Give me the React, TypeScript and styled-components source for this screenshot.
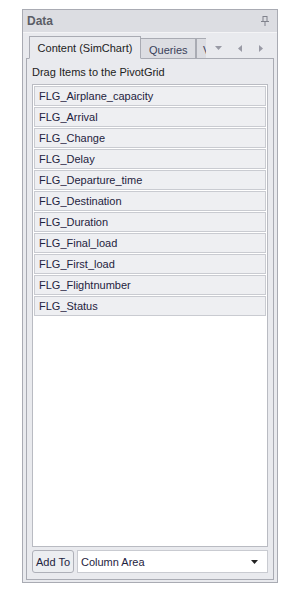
import React from "react";
import styled, { createGlobalStyle } from "styled-components";

const Global = createGlobalStyle`
  html, body { margin: 0; padding: 0; background: #ffffff; }
  body { font-family: "Liberation Sans", Arial, sans-serif; }
`;

const Page = styled.div`
  width: 283px;
  height: 597px;
  padding: 9px 5px 14px 22px;
  box-sizing: border-box;
  display: flex;
`;

const Panel = styled.div`
  flex: 1;
  display: flex;
  flex-direction: column;
  border: 1px solid #a9abb3;
  background: #e9eaee;
`;

const Header = styled.div`
  height: 22px;
  display: flex;
  align-items: center;
  justify-content: space-between;
  padding: 0 8px 0 4px;
  background: #dcdde2;
  border-bottom: 1px solid #f4f4f6;
  font-family: "Liberation Sans", Arial, sans-serif;
  font-weight: bold;
  font-size: 12px;
  color: #5b5d66;
`;

const TabStrip = styled.div`
  display: flex;
  align-items: flex-end;
  height: 25px;
  padding: 0 0 0 6px;
  position: relative;
  z-index: 1;
`;

const Tab = styled.div<{ $active?: boolean; $w: number }>`
  width: ${(p) => p.$w}px;
  flex: none;
  height: ${(p) => (p.$active ? 23 : 20)}px;
  box-sizing: border-box;
  border: 1px solid #a9abb3;
  border-bottom: ${(p) => (p.$active ? "1px solid #e9eaee" : "none")};
  margin-bottom: ${(p) => (p.$active ? -1 : 0)}px;
  background: ${(p) => (p.$active ? "#e9eaee" : "#dcdde2")};
  display: flex;
  align-items: center;
  justify-content: ${(p) => (p.$active ? "center" : "flex-start")};
  padding-left: ${(p) => (p.$active ? 0 : 8)}px;
  padding-top: ${(p) => (p.$active ? 0 : 3)}px;
  font-family: "Liberation Sans", Arial, sans-serif;
  font-size: 11px;
  color: ${(p) => (p.$active ? "#222" : "#3a3f5a")};
  white-space: nowrap;
  overflow: hidden;
  & + & { border-left: none; }
`;

const TabClip = styled.div`
  width: 10px;
  height: 20px;
  overflow: hidden;
  display: flex;
  align-items: flex-end;
`;

const PartialTab = styled.div`
  width: 60px;
  height: 20px;
  flex: none;
  box-sizing: border-box;
  border-left: 1px solid #a9abb3;
  border-top: 1px solid #a9abb3;
  background: #dcdde2;
  padding: 3px 0 0 6px;
  display: flex;
  align-items: center;
  font-size: 11px;
  color: #3a3f5a;
`;

const TabNav = styled.div`
  display: flex;
  align-items: center;
  height: 20px;
  margin-left: 2px;
`;

const NavBtn = styled.div`
  width: 21px;
  height: 20px;
  display: flex;
  align-items: center;
  justify-content: center;
`;

const Body = styled.div`
  flex: 1;
  margin: 0 3px 2px 3px;
  border: 1px solid #a9abb3;
  display: flex;
  flex-direction: column;
  padding: 0 5px 6px 5px;
`;

const Hint = styled.div`
  height: 25px;
  display: flex;
  align-items: center;
  font-size: 11px;
  color: #222;
`;

const List = styled.div`
  flex: 1;
  background: #ffffff;
  border: 1px solid #b9bbc2;
  padding: 1px 1px;
  display: flex;
  flex-direction: column;
  gap: 1px;
`;

const Item = styled.div`
  height: 20px;
  box-sizing: border-box;
  border: 1px solid #c9cbd1;
  background: #eeeff2;
  display: flex;
  align-items: center;
  padding-left: 4px;
  font-size: 11px;
  color: #1e2340;
`;

const Footer = styled.div`
  display: flex;
  gap: 3px;
  margin-top: 3px;
  height: 23px;
`;

const Button = styled.div`
  width: 42px;
  box-sizing: border-box;
  border: 1px solid #aeb0b8;
  border-radius: 3px;
  background: #eceef1;
  display: flex;
  align-items: center;
  justify-content: center;
  font-size: 11px;
  color: #1e2340;
`;

const Select = styled.div`
  flex: 1;
  box-sizing: border-box;
  border: 1px solid #c9cbd1;
  background: #ffffff;
  display: flex;
  align-items: center;
  justify-content: space-between;
  padding: 0 9px 0 3px;
  font-size: 11px;
  color: #1e2340;
`;

const Tri = ({ dir, color = "#999aa5" }: { dir: "down" | "left" | "right"; color?: string }) => {
  const pts =
    dir === "down" ? "0,0 7,0 3.5,4" : dir === "left" ? "4,0 4,7 0,3.5" : "0,0 0,7 4,3.5";
  const w = dir === "down" ? 7 : 4;
  const h = dir === "down" ? 4 : 7;
  return (
    <svg width={w} height={h} viewBox={`0 0 ${w} ${h}`}>
      <polygon points={pts} fill={color} />
    </svg>
  );
};

const Pin = () => (
  <svg width="8" height="10" viewBox="0 0 8 10">
    <rect x="2" y="0.5" width="4" height="5" fill="none" stroke="#80828c" />
    <rect x="0" y="5" width="8" height="1" fill="#80828c" />
    <rect x="3.5" y="6" width="1" height="4" fill="#80828c" />
  </svg>
);

const items = [
  "FLG_Airplane_capacity",
  "FLG_Arrival",
  "FLG_Change",
  "FLG_Delay",
  "FLG_Departure_time",
  "FLG_Destination",
  "FLG_Duration",
  "FLG_Final_load",
  "FLG_First_load",
  "FLG_Flightnumber",
  "FLG_Status",
];

export default function App() {
  return (
    <>
      <Global />
      <Page>
        <Panel>
          <Header>
            <span>Data</span>
            <Pin />
          </Header>
          <TabStrip>
            <Tab $active $w={112}>Content (SimChart)</Tab>
            <Tab $w={55}>Queries</Tab>
            <TabClip>
              <PartialTab>V</PartialTab>
            </TabClip>
            <TabNav>
              <NavBtn><Tri dir="down" /></NavBtn>
              <NavBtn><Tri dir="left" /></NavBtn>
              <NavBtn><Tri dir="right" /></NavBtn>
            </TabNav>
          </TabStrip>
          <Body>
            <Hint>Drag Items to the PivotGrid</Hint>
            <List>
              {items.map((t) => (
                <Item key={t}>{t}</Item>
              ))}
            </List>
            <Footer>
              <Button>Add To</Button>
              <Select>
                <span>Column Area</span>
                <Tri dir="down" color="#222" />
              </Select>
            </Footer>
          </Body>
        </Panel>
      </Page>
    </>
  );
}
